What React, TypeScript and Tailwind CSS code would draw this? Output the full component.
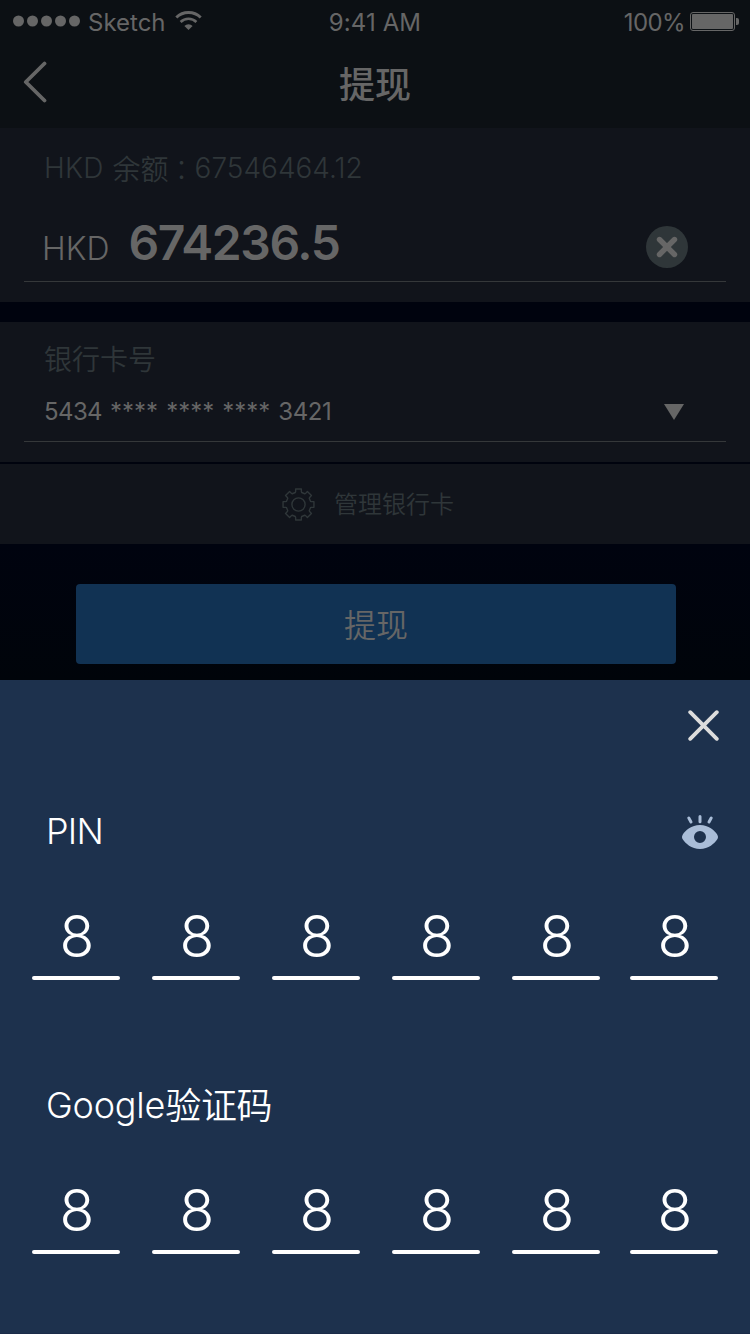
import React from "react";

const digitCells = ["8", "8", "8", "8", "8", "8"];

function StatusBar() {
  return (
    <div className="grid h-11 grid-cols-3 items-center text-[24px] leading-[44px]">
      <div className="flex h-11 items-center pl-[13px]">
        <svg width="68" height="12" viewBox="0 0 68 12" fill="#666" className="mb-[3px]">
          <circle cx="5.5" cy="6" r="5.5" />
          <circle cx="19.5" cy="6" r="5.5" />
          <circle cx="33.5" cy="6" r="5.5" />
          <circle cx="47.5" cy="6" r="5.5" />
          <circle cx="61.5" cy="6" r="5.5" />
        </svg>
        <span className="ml-[7px] mt-px">Sketch</span>
        <svg width="27" height="19" viewBox="0 0 27 19" className="mb-[4px] ml-[9px]" fill="none" stroke="#666">
          <path d="M1.3 6.6a17.2 17.2 0 0 1 24.4 0" strokeWidth="2.8" />
          <path d="M5.6 11a11.2 11.2 0 0 1 15.8 0" strokeWidth="2.6" />
          <path d="M13.5 19 9.4 14.9a5.8 5.8 0 0 1 8.2 0z" fill="#666" stroke="none" />
        </svg>
      </div>
      <div className="mt-px text-center tracking-[0.1px]">9:41 AM</div>
      <div className="flex h-11 items-center justify-end pr-[11px]">
        <span className="mr-[5px] mt-px tracking-[-0.6px]">100%</span>
        <svg width="49" height="19" viewBox="0 0 49 19" className="mb-[3px]">
          <rect x="0.5" y="0.5" width="44" height="18" rx="2.5" fill="none" stroke="#666" />
          <rect x="2" y="2" width="41" height="15" rx="1" fill="#666" />
          <path d="M46 6h1a2 2 0 0 1 2 2v3a2 2 0 0 1-2 2h-1z" fill="#666" />
        </svg>
      </div>
    </div>
  );
}

function NavBar() {
  return (
    <div className="grid h-[84px] grid-cols-[1fr_auto_1fr] items-center">
      <svg width="24" height="42" viewBox="0 0 24 42" className="mb-[8px] ml-[23px]" fill="none" stroke="#666" strokeWidth="3.8" strokeLinecap="round" strokeLinejoin="round">
        <path d="M21.5 2.5 2.8 21l18.7 18.5" />
      </svg>
      <h1 className="mb-[2px] text-[36px] font-medium leading-[50px]">提现</h1>
      <span />
    </div>
  );
}

function Gear() {
  const teeth = [0, 45, 90, 135, 180, 225, 270, 315];
  const points: string[] = [];
  for (const t of teeth) {
    for (const [r, o] of [[12.4, -15], [13.2, -12.5], [15.7, -10.5], [15.7, 10.5], [13.2, 12.5], [12.4, 15]]) {
      const a = ((t + o - 90) * Math.PI) / 180;
      points.push(`${(16.5 + r * Math.cos(a)).toFixed(2)},${(16.5 + r * Math.sin(a)).toFixed(2)}`);
    }
  }
  return (
    <svg width="33" height="33" viewBox="0 0 33 33" fill="none" stroke="#2f3639" strokeWidth="1.4" strokeLinejoin="round">
      <polygon points={points.join(" ")} />
      <circle cx="16.5" cy="16.5" r="6.6" />
    </svg>
  );
}

function CodeRow() {
  return (
    <div className="flex gap-8 pl-8">
      {digitCells.map((d, i) => (
        <div key={i} className="flex w-[88px] flex-col items-center last:-ml-[2px]">
          <span className="pl-[2px] pt-px text-[57px] font-light leading-[79px] [font-optical-sizing:none]">{d}</span>
          <span className="h-1 w-full rounded-[2px] bg-white" />
        </div>
      ))}
    </div>
  );
}

export default function App() {
  return (
    <div className="flex h-[1334px] w-[750px] flex-col overflow-hidden bg-[#00030e] font-['Inter','Noto_Sans_CJK_SC',sans-serif] text-[#666]">
      <header className="h-32 bg-[#0c1014]">
        <StatusBar />
        <NavBar />
      </header>

      <section className="h-[174px] bg-[#11141b] px-6">
        <div className="flex pl-5 pt-[21px] text-[28px] font-light leading-[39px] text-[#2f3639]">
          <span className="tracking-[0.2px]">HKD</span>
          <span className="ml-[9px] font-['Noto_Sans_CJK_SC',sans-serif] font-[350] leading-[38px]">余额</span>
          <span className="w-[26px] font-['Noto_Sans_CJK_TC',sans-serif] font-light indent-[-1px] leading-[40px]">：</span>
          <span>67546464.12</span>
        </div>
        <div className="flex h-[93px] items-center justify-between border-b border-[#35383a] pl-[18px] pr-[38px]">
          <div className="mt-[21px] flex items-baseline leading-[60px]">
            <span className="text-[32px] font-light">HKD</span>
            <span className="ml-[19px] text-[48px] font-semibold tracking-[-1.4px]">674236.5</span>
          </div>
          <svg width="42" height="42" viewBox="0 0 42 42" className="mt-[23px]">
            <circle cx="21" cy="21" r="21" fill="#2f3639" />
            <path d="m13.5 13.5 15 15m0-15-15 15" stroke="#666" strokeWidth="5.4" strokeLinecap="round" />
          </svg>
        </div>
      </section>

      <section className="mt-5 h-[140px] bg-[#11141b] px-6">
        <div className="pl-5 pt-[18px] text-[28px] font-[350] leading-[40px] text-[#2f3639]">银行卡号</div>
        <div className="flex h-[62px] items-center justify-between border-b border-[#35383a] pl-5 pr-[42px]">
          <span className="mt-[3px] flex gap-[8px] text-[24px] leading-[32px]">
            <span className="tracking-[-0.6px]">5434</span>
            <span>****</span>
            <span>****</span>
            <span>****</span>
            <span className="tracking-[-0.4px]">3421</span>
          </span>
          <svg width="20" height="16" viewBox="0 0 20 16" fill="#666" className="mt-[2px]">
            <path d="M0 0h20L10 16z" />
          </svg>
        </div>
      </section>

      <section className="mt-0.5 flex h-20 items-center justify-center bg-[#11141b] pr-[14px] text-[24px] font-[350] text-[#2f3639]">
        <Gear />
        <span className="ml-[19px] mt-[2px] leading-[32px]">管理银行卡</span>
      </section>

      <div className="h-[136px] bg-linear-to-b from-[#00030f] to-[#00040a] pl-[76px] pt-10">
        <button className="h-20 w-[600px] rounded-[4px] bg-[#113253] pt-[3px] text-[32px] font-[350] leading-[77px]">提现</button>
      </div>

      <section className="h-[654px] border-b border-[#1a2b48] bg-[#1d314d] text-white">
        <div className="flex h-[90px] items-center justify-end pr-[31px]">
          <svg width="31" height="31" viewBox="0 0 31 31" stroke="#ddd" strokeWidth="3.8" strokeLinecap="round">
            <path d="m2.2 2.2 26.6 26.6m0-26.6L2.2 28.8" />
          </svg>
        </div>
        <div className="mt-9 flex h-[50px] items-center justify-between pl-[46px] pr-8">
          <span className="text-[36px] font-light leading-[50px] tracking-[-0.8px]">PIN</span>
          <svg width="36" height="35" viewBox="0 0 36 35" className="mt-[2px]">
            <path fill="#a9bdd8" fillRule="evenodd" d="M18 10c8.5 0 14.8 5.6 17.3 9.7q1.4 2.3 0 4.6C32.8 28.4 26.5 34 18 34S3.2 28.4.7 24.3q-1.4-2.3 0-4.6C3.2 15.6 9.5 10 18 10Zm0 6a6 6 0 1 0 0 12 6 6 0 0 0 0-12Z" />
            <path d="M6.8 3 9 7M18 1.500V6.700M29.2 3 27 7" stroke="#a9bdd8" strokeWidth="3" strokeLinecap="round" />
          </svg>
        </div>
        <div className="mt-10"><CodeRow /></div>
        <div className="mt-[100px] flex pl-[46px] text-[36px] font-light leading-[50px]">
          <span className="tracking-[-0.2px]">Google</span>
          <span className="pt-[2px] font-[350] leading-[48px] tracking-[-0.3px]">验证码</span>
        </div>
        <div className="mt-10"><CodeRow /></div>
      </section>
    </div>
  );
}
